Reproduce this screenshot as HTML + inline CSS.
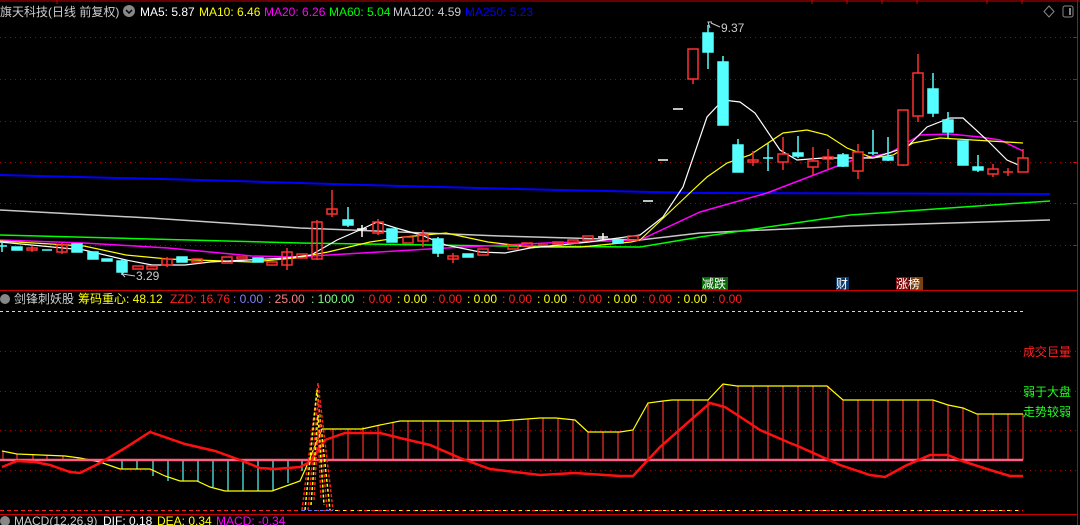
<!DOCTYPE html>
<html><head><meta charset="utf-8"><style>
html,body{margin:0;padding:0;background:#000;width:1080px;height:525px;overflow:hidden}
svg{display:block}
text{font-family:"Liberation Sans","Noto Sans CJK SC",sans-serif;font-size:12px}
</style></head><body>
<svg width="1080" height="525" viewBox="0 0 1080 525" xmlns="http://www.w3.org/2000/svg">
<!-- borders -->
<line x1="0" y1="1" x2="1080" y2="1" stroke="#c00" stroke-width="1"/>
<g stroke="#c00"><line x1="57" y1="0" x2="57" y2="4"/><line x1="812" y1="0" x2="812" y2="4"/><line x1="847" y1="0" x2="847" y2="4"/><line x1="882" y1="0" x2="882" y2="4"/><line x1="917" y1="0" x2="917" y2="4"/><line x1="987" y1="0" x2="987" y2="4"/><line x1="1022" y1="0" x2="1022" y2="4"/></g>
<line x1="1077.5" y1="0" x2="1077.5" y2="525" stroke="#c00"/>
<line x1="0" y1="290.5" x2="1078" y2="290.5" stroke="#c00"/>
<line x1="0" y1="514.5" x2="1078" y2="514.5" stroke="#c00"/>
<!-- main grid -->
<g stroke="#a00" stroke-dasharray="1,4">
<line x1="0" y1="37.5" x2="1077" y2="37.5"/><line x1="0" y1="79.5" x2="1077" y2="79.5"/><line x1="0" y1="121.5" x2="1077" y2="121.5"/><line x1="0" y1="162.5" x2="1077" y2="162.5"/><line x1="0" y1="203.5" x2="1077" y2="203.5"/><line x1="0" y1="245.5" x2="1077" y2="245.5"/>
<line x1="0" y1="351.5" x2="1077" y2="351.5"/><line x1="0" y1="391.5" x2="1077" y2="391.5"/><line x1="0" y1="430.5" x2="1077" y2="430.5"/><line x1="0" y1="470.5" x2="1077" y2="470.5"/>
</g>
<g stroke="#c00"><line x1="1073" y1="37.5" x2="1077" y2="37.5"/><line x1="1073" y1="79.5" x2="1077" y2="79.5"/><line x1="1073" y1="121.5" x2="1077" y2="121.5"/><line x1="1073" y1="162.5" x2="1077" y2="162.5"/><line x1="1073" y1="203.5" x2="1077" y2="203.5"/><line x1="1073" y1="245.5" x2="1077" y2="245.5"/></g>
<!-- MAs -->
<g fill="none" stroke-width="1.2">
<polyline stroke="#0000ff" stroke-width="2" points="0,175 200,180 400,186 560,190 700,193 1050,194"/>
<polyline stroke="#c8c8c8" stroke-width="1.5" points="0,210 150,218 300,228 500,236 640,240 700,233 850,226 1050,220"/>
<polyline stroke="#00ff00" stroke-width="1.5" points="0,235 150,239 300,243 500,246 640,247 700,237 850,215 1050,201"/>
<polyline stroke="#ff00ff" stroke-width="1.5" points="0,240 84,243 168,248 252,256 295,257 379,252 463,247 547,243 640,240 700,212 767,193 853,160 890,153 920,135 950,134 980,137 1000,140 1023,151"/>
<polyline stroke="#ffff00" points="0,241 84,246 126,255 168,259 252,262 295,258 328,252 370,242 404,237 446,233 488,242 530,247 581,247 631,242 640,240 693,190 707,177 727,163 750,155 783,133 807,130 827,135 847,148 873,158 893,155 913,143 940,138 973,140 1023,143"/>
<polyline stroke="#ffffff" points="0,242 84,250 126,260 152,265 185,265 210,262 286,258 311,255 337,240 362,229 377,222 396,228 421,235 446,245 480,252 505,253 530,248 589,242 640,235 663,217 683,187 707,117 723,100 740,102 755,113 780,150 797,160 823,158 873,158 907,147 927,127 950,118 963,118 987,140 1007,160 1023,167"/>
</g>
<!-- candles -->
<g id="c" stroke-width="1.5">
<!-- format: wick line, body rect -->
<g stroke="#ff3030" fill="none">
<line x1="32" y1="246" x2="32" y2="252"/><rect x="27" y="248" width="10" height="2"/>
<line x1="62" y1="243" x2="62" y2="254"/><rect x="57" y="245" width="10" height="7"/>
<rect x="133" y="266" width="10" height="3"/><rect x="147" y="266" width="10" height="3"/>
<line x1="167" y1="257" x2="167" y2="267"/><rect x="162" y="259" width="10" height="6"/>
<rect x="192" y="259" width="10" height="3"/>
<rect x="222" y="257" width="10" height="6"/><rect x="237" y="257" width="10" height="2"/>
<rect x="267" y="262" width="10" height="3"/>
<line x1="287" y1="248" x2="287" y2="270"/><rect x="282" y="252" width="10" height="13"/>
<rect x="297" y="254" width="10" height="4"/>
<line x1="317" y1="220" x2="317" y2="260"/><rect x="312" y="222" width="10" height="37"/>
<line x1="332" y1="190" x2="332" y2="217"/><rect x="327" y="209" width="10" height="5"/>
<line x1="378" y1="219" x2="378" y2="235"/><rect x="373" y="222" width="10" height="11"/>
<rect x="403" y="237" width="10" height="6"/>
<line x1="423" y1="230" x2="423" y2="247"/><rect x="418" y="235" width="10" height="6"/>
<line x1="453" y1="253" x2="453" y2="263"/><rect x="448" y="256" width="10" height="3"/>
<rect x="478" y="249" width="10" height="6"/><rect x="508" y="245" width="10" height="4"/>
<rect x="522" y="243" width="10" height="3"/><line x1="538" y1="245" x2="548" y2="245"/>
<rect x="553" y="242" width="10" height="2"/><rect x="568" y="240" width="10" height="3"/>
<rect x="583" y="236" width="10" height="4"/><rect x="628" y="236" width="10" height="4"/>
<line x1="693" y1="49" x2="693" y2="84"/><rect x="688" y="49" width="10" height="30" fill="#000"/>
<line x1="753" y1="151" x2="753" y2="166"/><rect x="748" y="160" width="10" height="2"/>
<line x1="783" y1="137" x2="783" y2="170"/><rect x="778" y="154" width="10" height="8" fill="#000"/>
<line x1="813" y1="147" x2="813" y2="176"/><rect x="808" y="161" width="10" height="6" fill="#000"/>
<line x1="828" y1="149" x2="828" y2="169"/><rect x="823" y="157" width="10" height="2"/>
<line x1="858" y1="144" x2="858" y2="179"/><rect x="853" y="152" width="10" height="19" fill="#000"/>
<line x1="903" y1="110" x2="903" y2="166"/><rect x="898" y="110" width="10" height="55" fill="#000"/>
<line x1="918" y1="54" x2="918" y2="122"/><rect x="913" y="73" width="10" height="43" fill="#000"/>
<line x1="993" y1="164" x2="993" y2="177"/><rect x="988" y="169" width="10" height="5" fill="#000"/>
<line x1="1008" y1="168" x2="1008" y2="176"/><line x1="1003" y1="172" x2="1013" y2="172"/>
<line x1="1023" y1="149" x2="1023" y2="158"/><rect x="1018" y="158" width="10" height="14" fill="#000"/>
</g>
<g stroke="#55ffff" fill="#55ffff">
<line x1="2" y1="242" x2="2" y2="252"/><line x1="-3" y1="246" x2="7" y2="246"/>
<rect x="12" y="247" width="10" height="3"/><line x1="42" y1="250" x2="52" y2="250"/>
<rect x="72" y="244" width="10" height="8"/><rect x="88" y="252" width="10" height="7"/>
<rect x="102" y="259" width="10" height="2"/><line x1="122" y1="259" x2="122" y2="275"/><rect x="117" y="261" width="10" height="11"/>
<rect x="177" y="257" width="10" height="5"/><rect x="253" y="258" width="10" height="4"/>
<line x1="348" y1="207" x2="348" y2="227"/><rect x="343" y="220" width="10" height="5"/>
<rect x="387" y="229" width="10" height="13"/>
<line x1="438" y1="237" x2="438" y2="257"/><rect x="433" y="239" width="10" height="14"/>
<rect x="463" y="254" width="10" height="3"/><rect x="613" y="240" width="10" height="3"/>
<line x1="708" y1="25" x2="708" y2="69"/><rect x="703" y="33" width="10" height="19"/>
<line x1="723" y1="56" x2="723" y2="125"/><rect x="718" y="62" width="10" height="63"/>
<line x1="738" y1="139" x2="738" y2="172"/><rect x="733" y="145" width="10" height="27"/>
<line x1="768" y1="143" x2="768" y2="171"/><line x1="763" y1="158" x2="773" y2="158"/>
<line x1="798" y1="136" x2="798" y2="158"/><rect x="793" y="153" width="10" height="3"/>
<line x1="843" y1="153" x2="843" y2="167"/><rect x="838" y="155" width="10" height="11"/>
<line x1="873" y1="130" x2="873" y2="155"/><line x1="868" y1="153" x2="878" y2="153"/>
<line x1="888" y1="137" x2="888" y2="161"/><rect x="883" y="157" width="10" height="3"/>
<line x1="933" y1="73" x2="933" y2="117"/><rect x="928" y="89" width="10" height="24"/>
<line x1="948" y1="112" x2="948" y2="138"/><rect x="943" y="120" width="10" height="12"/>
<rect x="958" y="141" width="10" height="24"/>
<line x1="978" y1="155" x2="978" y2="172"/><rect x="973" y="167" width="10" height="3"/>
</g>
<g stroke="#fff"><line x1="362" y1="225" x2="362" y2="237"/><line x1="357" y1="229" x2="367" y2="229"/><line x1="603" y1="233" x2="603" y2="240"/><line x1="598" y1="237" x2="608" y2="237"/>
<line x1="673" y1="109" x2="683" y2="109"/><line x1="658" y1="160" x2="668" y2="160"/><line x1="643" y1="201" x2="653" y2="201"/></g>
</g>
<!-- price labels -->
<g stroke="#ccc" fill="none"><polyline points="125,271 122,274 125,277"/><line x1="122" y1="274" x2="135" y2="276"/><polyline points="710,28 708,22 712,22"/><line x1="711" y1="23" x2="720" y2="27"/></g>
<text x="136" y="280" fill="#ccc">3.29</text>
<text x="721" y="32" fill="#ccc">9.37</text>
<!-- header -->
<text x="0" y="16" fill="#ccc">旗天科技(日线 前复权)</text>
<circle cx="129" cy="11" r="6" fill="#888"/><polyline points="126,10 129,13 132,10" fill="none" stroke="#000" stroke-width="1.5"/>
<text x="140" y="16" fill="#fff">MA5: 5.87</text>
<text x="199" y="16" fill="#ffff00">MA10: 6.46</text>
<text x="264" y="16" fill="#ff00ff">MA20: 6.26</text>
<text x="329" y="16" fill="#00ff00">MA60: 5.04</text>
<text x="393" y="16" fill="#ccc">MA120: 4.59</text>
<text x="465" y="16" fill="#0000ff">MA250: 5.23</text>
<polygon points="1049,6 1054,11.5 1049,17 1044,11.5" fill="none" stroke="#888"/>
<rect x="1063" y="6" width="10" height="11" rx="2" fill="none" stroke="#888"/><rect x="1069" y="8" width="2" height="7" fill="#888"/>
<!-- tags -->
<rect x="702" y="277" width="13" height="13" fill="#0a6a0a"/><rect x="715" y="277" width="13" height="13" fill="#0a6a0a"/>
<text x="702" y="288" fill="#fff">减跌</text>
<rect x="836" y="277" width="13" height="13" fill="#0a3a6a"/><text x="836" y="288" fill="#fff">财</text>
<rect x="896" y="277" width="13" height="13" fill="#7a0a0a"/><rect x="910" y="277" width="13" height="13" fill="#7a4010"/>
<text x="896" y="288" fill="#fff">涨榜</text>
<!-- indicator header -->
<circle cx="5" cy="299" r="5" fill="#888"/>
<text x="14" y="303" fill="#ccc">剑锋刺妖股</text>
<text x="78" y="303" fill="#ffff00">筹码重心: 48.12</text>
<text x="170" y="303" fill="#ff2020">ZZD: 16.76</text>
<text x="233" y="303" fill="#8080ff">: 0.00</text>
<text x="268" y="303" fill="#ff8080">: 25.00</text>
<text x="311" y="303" fill="#80ff80">: 100.00</text>
<text x="362" y="303" fill="#ff2020">: 0.00</text>
<text x="397" y="303" fill="#ffff00">: 0.00</text>
<text x="432" y="303" fill="#ff2020">: 0.00</text>
<text x="467" y="303" fill="#ffff00">: 0.00</text>
<text x="502" y="303" fill="#ff2020">: 0.00</text>
<text x="537" y="303" fill="#ffff00">: 0.00</text>
<text x="572" y="303" fill="#ff2020">: 0.00</text>
<text x="607" y="303" fill="#ffff00">: 0.00</text>
<text x="642" y="303" fill="#ff2020">: 0.00</text>
<text x="677" y="303" fill="#ffff00">: 0.00</text>
<text x="712" y="303" fill="#ff2020">: 0.00</text>
<line x1="0" y1="311.5" x2="1023" y2="311.5" stroke="#a0ffa0" stroke-dasharray="3,3"/>
<!-- indicator bars -->
<g stroke="#ff3030" stroke-width="1.2">
<line x1="3" y1="451" x2="3" y2="460"/><line x1="17" y1="454" x2="17" y2="460"/><line x1="33" y1="455" x2="33" y2="460"/><line x1="47" y1="455" x2="47" y2="460"/><line x1="63" y1="456" x2="63" y2="460"/><line x1="78" y1="458" x2="78" y2="460"/>
</g>
<g stroke="#55ffff" stroke-width="1.2">
<line x1="122" y1="460" x2="122" y2="469"/><line x1="137" y1="460" x2="137" y2="469"/><line x1="153" y1="460" x2="153" y2="476"/><line x1="168" y1="460" x2="168" y2="481"/><line x1="183" y1="460" x2="183" y2="481"/><line x1="198" y1="460" x2="198" y2="481"/><line x1="213" y1="460" x2="213" y2="487"/><line x1="228" y1="460" x2="228" y2="491"/><line x1="243" y1="460" x2="243" y2="491"/><line x1="258" y1="460" x2="258" y2="491"/><line x1="273" y1="460" x2="273" y2="491"/><line x1="288" y1="460" x2="288" y2="483"/><line x1="302" y1="460" x2="302" y2="471"/>
</g>
<g stroke="#ff3030" stroke-width="1.2">
<line x1="333" y1="429" x2="333" y2="460"/><line x1="348" y1="429" x2="348" y2="460"/><line x1="363" y1="427" x2="363" y2="460"/><line x1="378" y1="425" x2="378" y2="460"/><line x1="393" y1="422" x2="393" y2="460"/><line x1="408" y1="421" x2="408" y2="460"/><line x1="423" y1="421" x2="423" y2="460"/><line x1="438" y1="421" x2="438" y2="460"/><line x1="453" y1="421" x2="453" y2="460"/><line x1="468" y1="421" x2="468" y2="460"/><line x1="483" y1="421" x2="483" y2="460"/><line x1="498" y1="421" x2="498" y2="460"/><line x1="513" y1="420" x2="513" y2="460"/><line x1="528" y1="419" x2="528" y2="460"/><line x1="543" y1="418" x2="543" y2="460"/><line x1="558" y1="418" x2="558" y2="460"/><line x1="573" y1="420" x2="573" y2="460"/><line x1="588" y1="432" x2="588" y2="460"/><line x1="603" y1="432" x2="603" y2="460"/><line x1="618" y1="432" x2="618" y2="460"/><line x1="633" y1="430" x2="633" y2="460"/><line x1="648" y1="403" x2="648" y2="460"/><line x1="663" y1="401" x2="663" y2="460"/><line x1="678" y1="400" x2="678" y2="460"/><line x1="693" y1="400" x2="693" y2="460"/><line x1="708" y1="400" x2="708" y2="460"/><line x1="723" y1="384" x2="723" y2="460"/><line x1="738" y1="386" x2="738" y2="460"/><line x1="753" y1="386" x2="753" y2="460"/><line x1="768" y1="386" x2="768" y2="460"/><line x1="783" y1="386" x2="783" y2="460"/><line x1="798" y1="386" x2="798" y2="460"/><line x1="813" y1="386" x2="813" y2="460"/><line x1="828" y1="386" x2="828" y2="460"/><line x1="843" y1="400" x2="843" y2="460"/><line x1="858" y1="400" x2="858" y2="460"/><line x1="873" y1="400" x2="873" y2="460"/><line x1="888" y1="400" x2="888" y2="460"/><line x1="903" y1="400" x2="903" y2="460"/><line x1="918" y1="400" x2="918" y2="460"/><line x1="933" y1="400" x2="933" y2="460"/><line x1="948" y1="405" x2="948" y2="460"/><line x1="963" y1="408" x2="963" y2="460"/><line x1="978" y1="414" x2="978" y2="460"/><line x1="993" y1="414" x2="993" y2="460"/><line x1="1008" y1="414" x2="1008" y2="460"/><line x1="1023" y1="414" x2="1023" y2="460"/>
</g>
<polyline fill="none" stroke="#ffff00" stroke-width="1.2" points="2,451 17,454 65,456 80,458 100,462 120,469 150,469 165,476 180,481 197,481 210,487 225,491 272,491 300,481 305,470 322,429 362,429 380,425 400,421 500,421 540,418 556,418 575,420 588,432 620,432 633,430 648,403 663,401 672,400 708,400 723,384 737,386 827,386 843,400 933,400 948,405 963,408 977,414 1023,414"/>
<line x1="0" y1="460" x2="1023" y2="460" stroke="#ff6080" stroke-width="2.5"/>
<polyline fill="none" stroke="#ff1010" stroke-width="2.5" points="2,467 17,461 35,462 50,465 70,472 80,473 100,463 125,448 150,432 185,444 215,451 240,460 260,468 275,469 300,467 310,462 325,440 345,433 380,433 400,438 430,445 460,458 490,469 540,475 575,473 620,476 633,476 660,447 710,403 725,407 745,420 760,430 790,443 800,447 840,465 870,475 885,477 905,466 930,455 948,455 962,461 990,470 1010,476 1023,476"/>
<!-- spike -->
<g fill="none" stroke-width="1.5" stroke-dasharray="3,2">
<polyline stroke="#ff2020" points="302,510 318,383 333,510"/>
<polyline stroke="#ffff00" points="305,510 317,390 330,510"/>
<polyline stroke="#ff2020" points="308,510 318,400 327,510"/>
<polyline stroke="#ffff00" points="311,505 318,415 324,505"/>
<polyline stroke="#ff2020" points="314,500 318,430 321,500"/>
</g>
<line x1="0" y1="510.5" x2="1023" y2="510.5" stroke="#ff2020" stroke-dasharray="4,3"/>
<line x1="335" y1="510.5" x2="1023" y2="510.5" stroke="#ffff00" stroke-dasharray="3,5"/>
<line x1="302" y1="510.5" x2="333" y2="510.5" stroke="#6080ff" stroke-dasharray="3,3"/>
<!-- right labels -->
<text x="1023" y="356" fill="#ff2020">成交巨量</text>
<text x="1023" y="396" fill="#20ff20">弱于大盘</text>
<text x="1023" y="416" fill="#20ff20">走势较弱</text>
<!-- macd header -->
<circle cx="5" cy="521" r="5" fill="#888"/>
<text x="14" y="525" fill="#ccc">MACD(12,26,9)</text>
<text x="103" y="525" fill="#fff">DIF: 0.18</text>
<text x="157" y="525" fill="#ffff00">DEA: 0.34</text>
<text x="216" y="525" fill="#ff00ff">MACD: -0.34</text>
</svg>
</body></html>
